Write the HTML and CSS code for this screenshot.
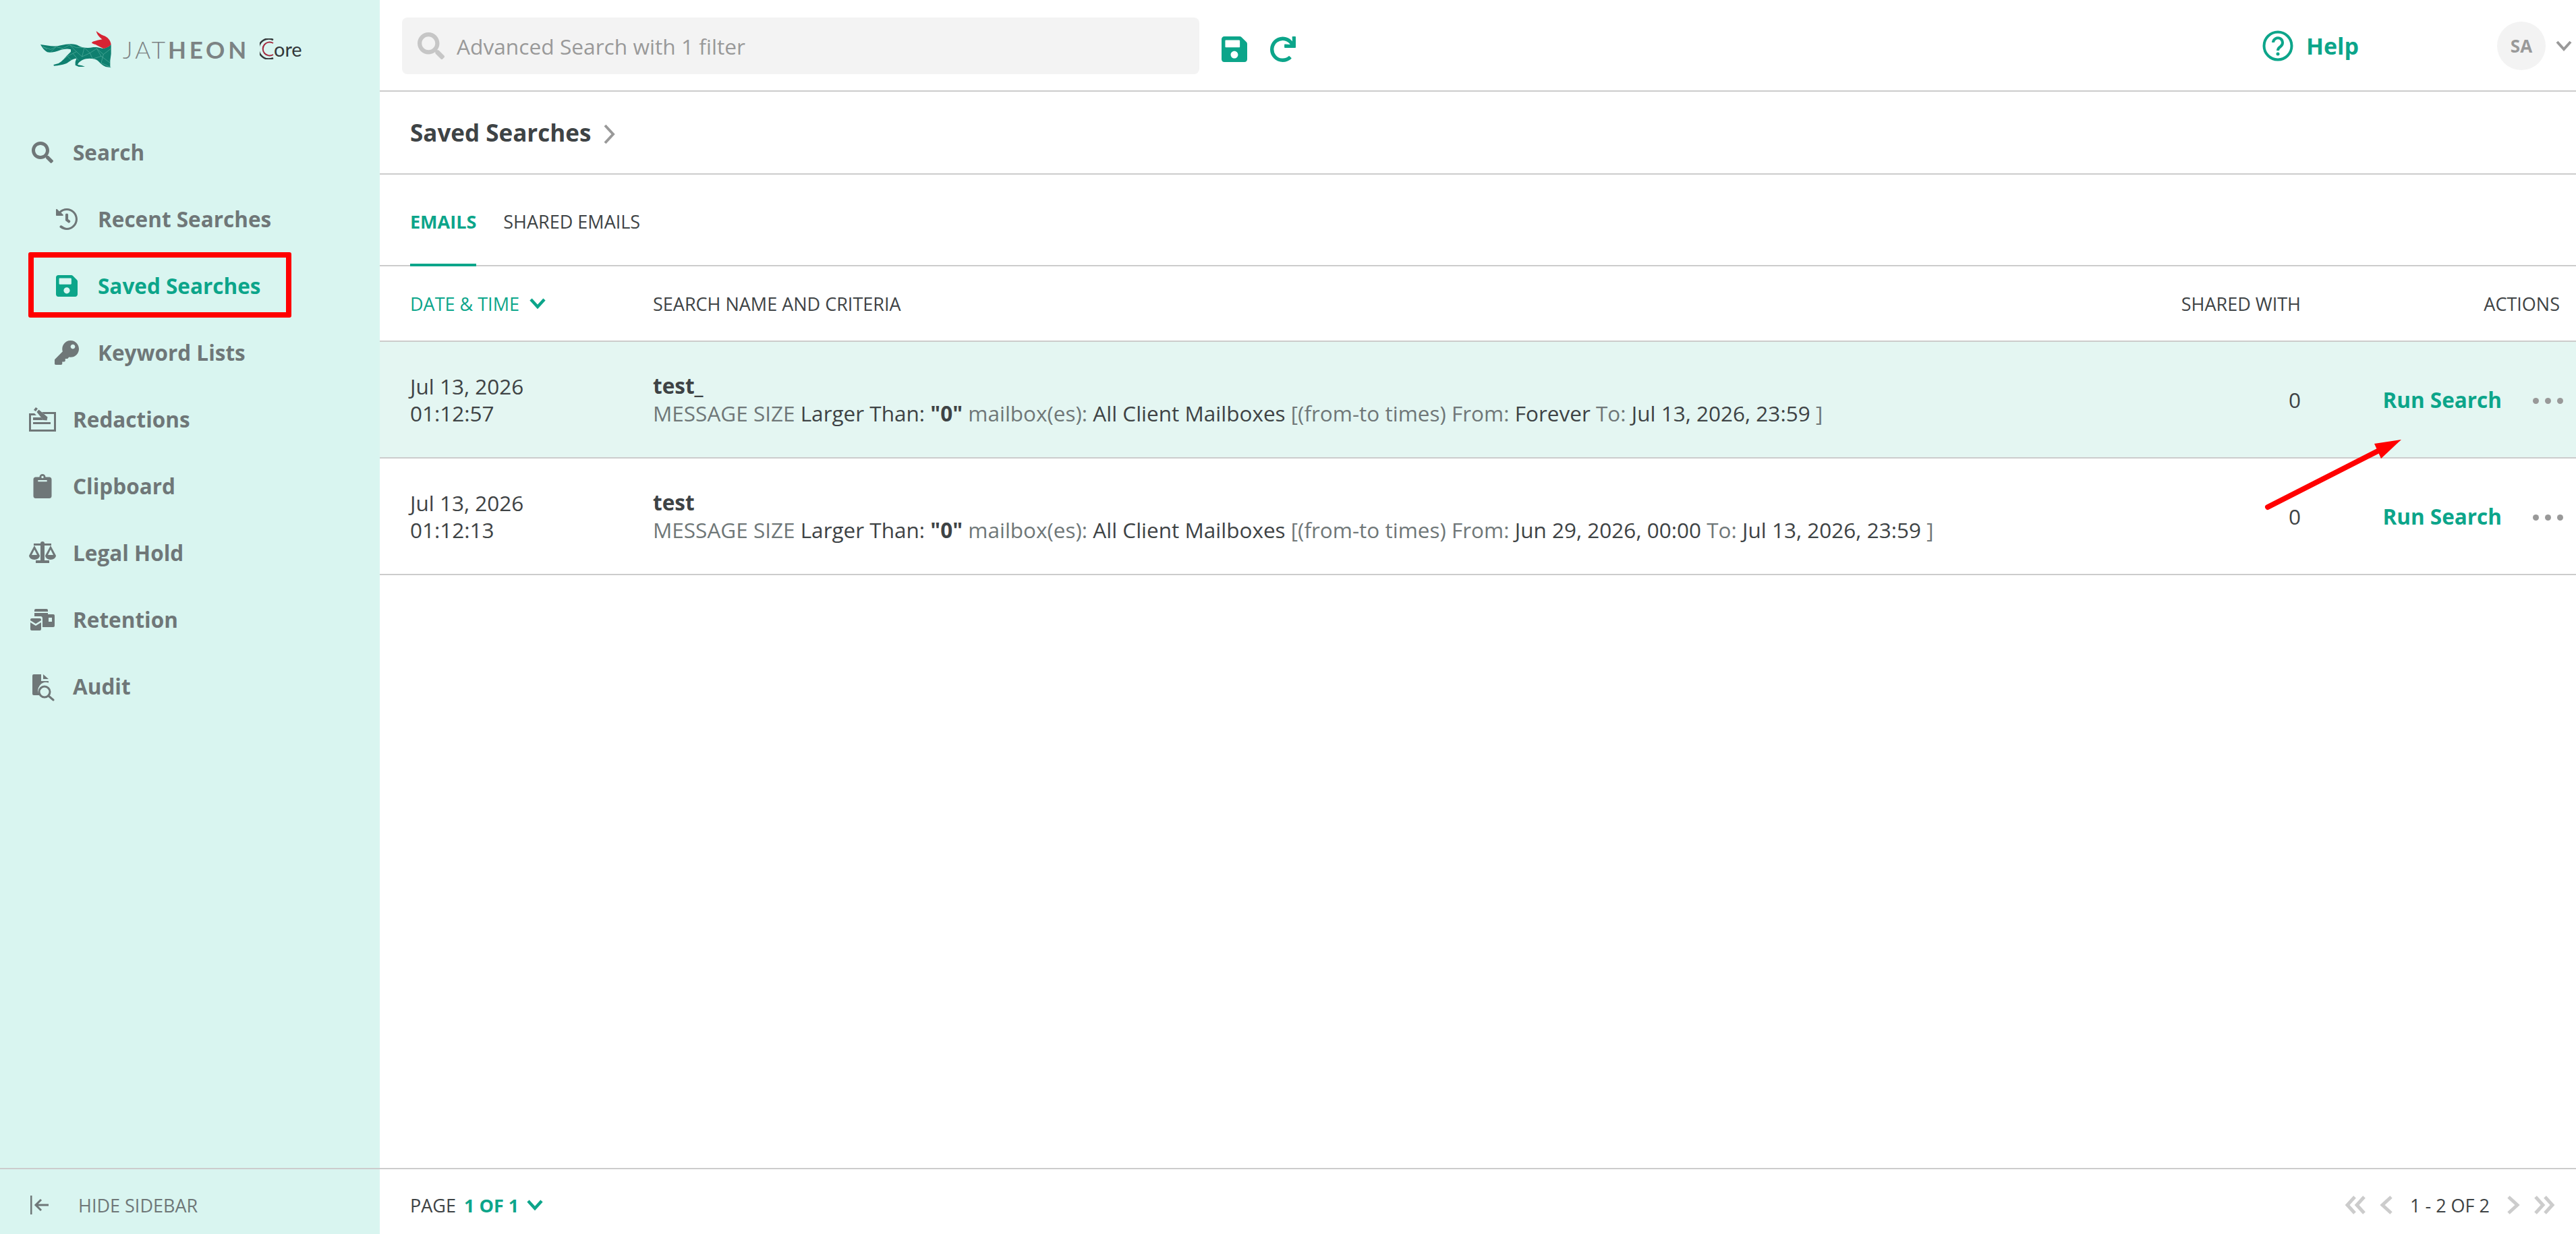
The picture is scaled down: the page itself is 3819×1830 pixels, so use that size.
FILE: index.html
```html
<!DOCTYPE html>
<html lang="en">
<head>
<meta charset="utf-8">
<title>Saved Searches</title>
<link rel="stylesheet" href="styles.css">
</head>
<body>
<div class="app">
  <aside class="sidebar">
    <div class="logo">
      <svg class="fox" viewBox="0 0 390 210">
        <defs><clipPath id="foxclip"><path d="M30 78C60 82 90 90 120 82 150 74 185 72 200 84 215 92 240 96 265 90 285 88 305 96 310 96 325 92 338 86 344 78V120L340 150 340 178 344 181 320 177C305 172 295 160 285 150 270 140 240 136 215 148 205 154 198 160 195 168L215 172 228 177 200 177 185 170 185 155 190 140C175 140 160 152 150 160 135 168 110 172 90 173L88 168 110 162C130 150 140 135 150 125L165 110 165 100C150 96 135 98 120 102 100 110 75 116 60 112 48 106 38 92 30 78Z"/></clipPath></defs>
        <path class="fox-body" d="M30 78C60 82 90 90 120 82 150 74 185 72 200 84 215 92 240 96 265 90 285 88 305 96 310 96 325 92 338 86 344 78V120L340 150 340 178 344 181 320 177C305 172 295 160 285 150 270 140 240 136 215 148 205 154 198 160 195 168L215 172 228 177 200 177 185 170 185 155 190 140C175 140 160 152 150 160 135 168 110 172 90 173L88 168 110 162C130 150 140 135 150 125L165 110 165 100C150 96 135 98 120 102 100 110 75 116 60 112 48 106 38 92 30 78Z"/>
        <path class="fox-head" d="M278 18C288 26 298 34 310 38 328 44 342 58 344 78 336 88 322 94 310 96 298 90 285 84 275 78 266 76 260 74 258 70 264 62 285 60 305 55 295 48 282 36 278 18Z"/>
        <g clip-path="url(#foxclip)"><path class="fox-mesh" d="M40 88L75 100 100 88 130 96 160 80 190 92 225 92 250 116 280 96 310 122 344 96M150 130L190 110 215 132 250 116 262 142 300 130 340 160M175 118L200 150M225 92L215 132M280 96L300 130M310 122L300 160 340 178M100 88L75 112M130 96L120 102M190 110L160 80M110 162L150 130 170 150M60 100L40 88"/></g>
      </svg>
      <span class="wordmark"><span class="thin">JAT</span><span class="heavy">HEON</span></span>
      <span class="core">
        <svg class="core-ring" viewBox="0 0 21 31"><path class="ring-dark" d="M20 2A15 15 0 1 0 20 29"/><path class="ring-red" d="M20 7A10 10 0 1 0 20 24"/></svg>
        <span class="core-text">ore</span>
      </span>
    </div>
    <nav class="nav">
      <a class="nav-item"><svg class="nav-icon" viewBox="0 0 512 512"><path d="M505 442.700L405.300 343c-4.500-4.500-10.600-7-17-7H372c27.600-35.300 44-79.700 44-128C416 93.100 322.900 0 208 0S0 93.100 0 208s93.100 208 208 208c48.300 0 92.700-16.400 128-44v16.300c0 6.400 2.500 12.500 7 17l99.700 99.700c9.400 9.400 24.600 9.400 33.900 0l28.300-28.300c9.400-9.400 9.400-24.600.100-34zM208 336c-70.700 0-128-57.200-128-128 0-70.700 57.200-128 128-128 70.700 0 128 57.200 128 128 0 70.700-57.200 128-128 128z"/></svg><span>Search</span></a>
      <a class="nav-item sub"><svg class="nav-icon" viewBox="8 8 496 496"><path d="M504 255.500c.3 136.600-111.200 248.400-247.800 248.500-59 0-113.200-20.500-155.800-54.900-11.100-8.900-11.900-25.500-1.900-35.600l8-8c8.600-8.600 22.400-9.500 31.900-2C173 425.100 212.800 456 256 456c110 0 200-90 200-200S366 56 256 56c-48.800 0-99.100 18.970-132 50l46.700 46.700c10.100 10.100 2.900 27.300-11.300 27.300H24c-8.800 0-16-7.200-16-16V38.600c0-14.300 17.200-21.400 27.300-11.300l49.400 49.400C129.200 34.100 189.600 8 256 8c136.800 0 247.700 110.800 248 247.500zM323 334.300l9.900-12.600c8.100-10.500 6.200-25.500-4.200-33.700L288 256.300V152c0-13.300-10.700-24-24-24h-16c-13.300 0-24 10.700-24 24v135.700l65.400 50.800c10.500 8.100 25.500 6.300 33.600-4.200z"/></svg><span>Recent Searches</span></a>
      <a class="nav-item sub active"><svg class="nav-icon" viewBox="0 32 448 448"><path d="M433.941 129.941l-83.882-83.882A48 48 0 0 0 316.118 32H48C21.490 32 0 53.490 0 80v352c0 26.510 21.490 48 48 48h352c26.510 0 48-21.490 48-48V163.882a48 48 0 0 0-14.059-33.941zM224 416c-35.346 0-64-28.654-64-64 0-35.346 28.654-64 64-64s64 28.654 64 64c0 35.346-28.654 64-64 64zm96-304.520V212c0 6.627-5.373 12-12 12H76c-6.627 0-12-5.373-12-12V108c0-6.627 5.373-12 12-12h228.520c3.183 0 6.235 1.264 8.485 3.515l3.480 3.480A11.996 11.996 0 0 1 320 111.480z"/></svg><span>Saved Searches</span></a>
      <a class="nav-item sub"><svg class="nav-icon key" viewBox="0 0 512 512"><path d="M512 176C512 273.200 433.200 352 336 352c-11.200 0-22.200-1.100-32.800-3.100l-24 27A24 24 0 0 1 261.200 384H224v40c0 13.300-10.700 24-24 24h-40v40c0 13.300-10.700 24-24 24H24c-13.300 0-24-10.700-24-24v-78.100c0-6.400 2.500-12.500 7-17l161.800-161.800C163.100 213.800 160 195.300 160 176 160 78.800 238.800 0 336 0c97.500 0 176 78.500 176 176zM336 128c0 26.500 21.500 48 48 48s48-21.500 48-48-21.500-48-48-48-48 21.500-48 48z"/></svg><span>Keyword Lists</span></a>
      <a class="nav-item"><svg class="nav-icon wide" viewBox="0 0 40 36"><path d="M0 9h8l3 3H3v21h34V10H22l-3-3h21v29H0z"/><path d="M7 4l3-4 3 2-3 4zM11.500 7l3-3.500 13 11-1 5-5.500-.5z"/><path d="M6 15h12l3 4H6zM6 22h26v3H6z"/></svg><span>Redactions</span></a>
      <a class="nav-item"><svg class="nav-icon tall" viewBox="0 0 384 512"><path d="M384 112v352c0 26.510-21.490 48-48 48H48c-26.510 0-48-21.490-48-48V112c0-26.510 21.490-48 48-48h80c0-35.290 28.710-64 64-64s64 28.710 64 64h80c26.510 0 48 21.490 48 48zM192 40c-13.250 0-24 10.750-24 24s10.750 24 24 24 24-10.750 24-24-10.750-24-24-24zm96 114v-20a6 6 0 0 0-6-6H102a6 6 0 0 0-6 6v20a6 6 0 0 0 6 6h180a6 6 0 0 0 6-6z"/></svg><span>Clipboard</span></a>
      <a class="nav-item"><svg class="nav-icon wide" viewBox="0 0 40 32"><path d="M7 2h10a3 3 0 0 1 6 0h10v3H23v22h7v4H10v-4h7V5H7z"/><path fill-rule="evenodd" d="M8 5l8 15a8 6 0 0 1-16 0zM8 11l-4 8h8zM32 5l8 15a8 6 0 0 1-16 0zM32 11l-4 8h8z"/></svg><span>Legal Hold</span></a>
      <a class="nav-item"><svg class="nav-icon wide" viewBox="-2 0 40 32"><path d="M6 2a2 2 0 0 1 2-2h16a2 2 0 0 1 2 2v2H6zM6 6h20v2h8a2 2 0 0 1 2 2v15a2 2 0 0 1-2 2H18V14a3 3 0 0 0-3-3H6z"/><path class="hole" d="M27 13h5v6h-5z"/><path d="M0 16a2 2 0 0 1 2-2h12a2 2 0 0 1 2 2v1l-8 5-8-5zM0 20l8 5 8-5v10a2 2 0 0 1-2 2H2a2 2 0 0 1-2-2z"/></svg><span>Retention</span></a>
      <a class="nav-item"><svg class="nav-icon audit" viewBox="0 0 33 40"><path d="M0 2a2 2 0 0 1 2-2h11v10h11v2.500a12 12 0 0 0-14 17.500v1H2a2 2 0 0 1-2-2zM16 0l8 7h-8z"/><circle class="lens" cx="18" cy="26" r="8"/><path class="lens-handle" d="M24 32l7 6"/></svg><span>Audit</span></a>
    </nav>
    <div class="side-foot">
      <svg class="hide-icon" viewBox="0 0 28 32"><path d="M1 2v28"/><path d="M27 16H8M16 8l-8 8 8 8"/></svg>
      <span>HIDE SIDEBAR</span>
    </div>
    <div class="red-box"></div>
  </aside>

  <main class="main">
    <header class="topbar">
      <div class="search-box">
        <svg class="search-icon" viewBox="0 0 512 512"><path d="M505 442.700L405.300 343c-4.500-4.500-10.600-7-17-7H372c27.600-35.300 44-79.700 44-128C416 93.100 322.900 0 208 0S0 93.100 0 208s93.100 208 208 208c48.300 0 92.700-16.400 128-44v16.300c0 6.400 2.500 12.500 7 17l99.700 99.700c9.400 9.400 24.600 9.400 33.900 0l28.300-28.300c9.400-9.400 9.400-24.600.100-34zM208 336c-70.700 0-128-57.200-128-128 0-70.700 57.200-128 128-128 70.700 0 128 57.200 128 128 0 70.700-57.200 128-128 128z"/></svg>
        <span>Advanced Search with 1 filter</span>
      </div>
      <svg class="tool-icon" viewBox="0 32 448 448"><path d="M433.941 129.941l-83.882-83.882A48 48 0 0 0 316.118 32H48C21.490 32 0 53.490 0 80v352c0 26.510 21.490 48 48 48h352c26.510 0 48-21.490 48-48V163.882a48 48 0 0 0-14.059-33.941zM224 416c-35.346 0-64-28.654-64-64 0-35.346 28.654-64 64-64s64 28.654 64 64c0 35.346-28.654 64-64 64zm96-304.520V212c0 6.627-5.373 12-12 12H76c-6.627 0-12-5.373-12-12V108c0-6.627 5.373-12 12-12h228.520c3.183 0 6.235 1.264 8.485 3.515l3.480 3.480A11.996 11.996 0 0 1 320 111.480z"/></svg>
      <svg class="tool-icon" viewBox="8 0 504 504"><path d="M500.330 0h-47.410a12 12 0 0 0-12 12.570l4 82.760A247.420 247.420 0 0 0 256 8C119.340 8 8.900 119.530 8 256.190 7.100 393.070 118.100 504 256 504a247.100 247.100 0 0 0 166.180-63.910 12 12 0 0 0 .48-17.430l-34-34a12 12 0 0 0-16.380-.55A176 176 0 1 1 402.100 157.800l-101.530-4.870a12 12 0 0 0-12.570 12v47.410a12 12 0 0 0 12 12h200.330a12 12 0 0 0 12-12V12a12 12 0 0 0-12-12z"/></svg>
      <div class="top-right">
        <a class="help">
          <svg class="help-icon" viewBox="0 0 46 46"><circle cx="23" cy="23" r="20.500"/><path d="M16 18a7 7 0 1 1 11 6c-3 2-4 3-4 6"/><circle class="help-dot" cx="23" cy="35" r="2.500"/></svg>
          <span>Help</span>
        </a>
        <span class="avatar">SA</span>
        <svg class="avatar-caret" viewBox="0 0 24 16"><path d="M2 2l10 11L22 2"/></svg>
      </div>
    </header>

    <div class="crumb">
      <h1>Saved Searches</h1>
      <svg class="crumb-chevron" viewBox="0 0 18 30"><path d="M3 2l12 13L3 28"/></svg>
    </div>

    <div class="tabs">
      <a class="tab on">EMAILS</a>
      <a class="tab">SHARED EMAILS</a>
    </div>

    <div class="table">
      <div class="row head">
        <div class="sort">DATE &amp; TIME <svg class="sort-chevron" viewBox="0 0 24 16"><path d="M2 2l10 11L22 2"/></svg></div>
        <div>SEARCH NAME AND CRITERIA</div>
        <div class="num">SHARED WITH</div>
        <div class="act-head">ACTIONS</div>
      </div>
      <div class="row item hl">
        <div class="date">Jul 13, 2026<br>01:12:57</div>
        <div class="info">
          <div class="name">test_</div>
          <div class="crit"><i>MESSAGE SIZE</i> Larger Than: <b>"0"</b> <i>mailbox(es):</i> All Client Mailboxes <i>[(from-to times) From:</i> Forever <i>To:</i> Jul 13, 2026, 23:59 <i>]</i></div>
        </div>
        <div class="num">0</div>
        <div class="acts"><a class="run">Run Search</a><span class="dots"><span></span><span></span><span></span></span></div>
      </div>
      <div class="row item">
        <div class="date">Jul 13, 2026<br>01:12:13</div>
        <div class="info">
          <div class="name">test</div>
          <div class="crit"><i>MESSAGE SIZE</i> Larger Than: <b>"0"</b> <i>mailbox(es):</i> All Client Mailboxes <i>[(from-to times) From:</i> Jun 29, 2026, 00:00 <i>To:</i> Jul 13, 2026, 23:59 <i>]</i></div>
        </div>
        <div class="num">0</div>
        <div class="acts"><a class="run">Run Search</a><span class="dots"><span></span><span></span><span></span></span></div>
      </div>
    </div>

    <footer class="foot">
      <div class="page">PAGE <b>1 OF 1</b> <svg class="sort-chevron" viewBox="0 0 24 16"><path d="M2 2l10 11L22 2"/></svg></div>
      <div class="pager">
        <svg class="pg dbl" viewBox="0 0 32 30"><path d="M15 3L4 15l11 12M29 3L18 15l11 12"/></svg>
        <svg class="pg" viewBox="0 0 20 30"><path d="M17 3L4 15l13 12"/></svg>
        <span class="count">1 - 2 OF 2</span>
        <svg class="pg" viewBox="0 0 20 30"><path d="M3 3l13 12L3 27"/></svg>
        <svg class="pg dbl" viewBox="0 0 32 30"><path d="M3 3l11 12L3 27M17 3l11 12-11 12"/></svg>
      </div>
    </footer>
  </main>

  <svg class="arrow" viewBox="0 0 220 120"><path class="arrow-line" d="M12 112L175 29"/><path class="arrow-head" d="M210 12L170 18 180 40Z"/></svg>
</div>
</body>
</html>
```

FILE: styles.css
```css
* { box-sizing: border-box; }
html, body { margin: 0; height: 100%; }
body { font-family: "Open Sans", sans-serif; color: #3e4345; background: #fff; }
svg { display: block; flex: none; }
a { color: inherit; text-decoration: none; }
b { font-weight: 700; }
i { font-style: normal; color: #6f7778; }

.app { position: relative; display: grid; grid-template-columns: 563px 1fr; width: 3819px; height: 1830px; overflow: hidden; }

/* sidebar */
.sidebar { position: relative; display: flex; flex-direction: column; background: #d9f5f0; color: #6f7778; }
.logo { display: flex; align-items: center; height: 144px; padding-left: 50px; }
.fox { width: 130px; height: 70px; margin-top: 6px; }
.fox-body { fill: #0f7f6f; }
.fox-head { fill: #d62433; }
.fox-mesh { fill: none; stroke: #6fc0ae; stroke-width: 1.500; }
.wordmark { margin-left: 2px; margin-top: 3px; font-family: Lato, sans-serif; font-size: 35px; color: #7c8384; line-height: 1; white-space: nowrap; }
.thin { font-weight: 300; letter-spacing: 4px; }
.heavy { font-weight: 700; letter-spacing: 4.800px; }
.core { display: flex; align-items: center; margin-left: 15px; }
.core-ring { width: 21px; height: 31px; }
.ring-dark { fill: none; stroke: #33383a; stroke-width: 2.500; }
.ring-red { fill: none; stroke: #a3283c; stroke-width: 2; }
.core-text { margin-left: 0; font-family: Lato, sans-serif; font-size: 29px; color: #33383a; line-height: 1; }

.nav { display: flex; flex-direction: column; padding-top: 32px; }
.nav-item { display: flex; align-items: center; height: 99px; padding-left: 47px; font-size: 31.500px; font-weight: 700; }
.nav-item.sub { padding-left: 83px; }
.nav-item.active { color: #0ca58a; }
.nav-icon { width: 32px; height: 32px; margin-right: 29px; fill: currentColor; }
.nav-item.sub .nav-icon { margin-right: 30px; }
.nav-icon.wide { width: 40px; height: 36px; margin-left: -4px; margin-right: 25px; }
.nav-icon.tall { height: 36px; }
.nav-item.sub .nav-icon.key { width: 36px; height: 36px; margin-left: -2px; margin-right: 28px; }
.nav-icon.audit { width: 33px; height: 40px; margin-top: 4px; margin-left: 1px; margin-right: 27px; }
.hole { fill: #d9f5f0; }
.lens { fill: #d9f5f0; stroke: currentColor; stroke-width: 3; }
.lens-handle { fill: none; stroke: currentColor; stroke-width: 3; stroke-linecap: round; }

.side-foot { display: flex; align-items: center; height: 98px; margin-top: auto; padding-left: 45px; padding-top: 10px; border-top: 2px solid #ccc; font-size: 27px; }
.hide-icon { width: 28px; height: 32px; margin-right: 43px; fill: none; stroke: currentColor; stroke-width: 3; }
.red-box { position: absolute; left: 42px; top: 374px; width: 390px; height: 97px; border: 8px solid #f00; border-radius: 3px; }

/* main */
.main { display: flex; flex-direction: column; min-width: 0; }
.topbar { display: flex; align-items: center; height: 136px; padding-left: 33px; padding-right: 6px; padding-top: 2px; border-bottom: 2px solid #ccc; }
.search-box { display: flex; align-items: center; width: 1182px; height: 84px; padding-left: 23px; border-radius: 8px; background: #f3f3f3; font-size: 31.700px; color: #999; }
.search-icon { width: 40px; height: 40px; margin-right: 18px; fill: #c6c6c6; }
.tool-icon { width: 38px; height: 38px; margin-left: 33px; margin-top: 10px; fill: #0ca58a; }
.tool-icon + .tool-icon { margin-left: 34px; }
.top-right { display: flex; align-items: center; margin-left: auto; }
.help { display: flex; align-items: center; color: #0ca58a; font-size: 34px; font-weight: 700; margin-right: 205px; }
.help-icon { width: 46px; height: 46px; margin-right: 19px; fill: none; stroke: #0ca58a; stroke-width: 4; }
.help-dot { fill: #0ca58a; stroke: none; }
.avatar { display: flex; align-items: center; justify-content: center; width: 72px; height: 72px; border-radius: 50%; background: #f3f3f3; color: #999; font-size: 26px; font-weight: 700; }
.avatar-caret { width: 24px; height: 16px; margin-left: 15px; fill: none; stroke: #999; stroke-width: 4; }

.crumb { display: flex; align-items: center; height: 123px; padding-left: 45px; border-bottom: 2px solid #ccc; }
.crumb h1 { margin: 0; font-size: 35px; font-weight: 700; color: #3e4345; }
.crumb-chevron { width: 18px; height: 30px; margin-left: 18px; margin-top: 4px; fill: none; stroke: #999; stroke-width: 4; }

.tabs { display: flex; gap: 40px; height: 136px; padding-left: 45px; border-bottom: 2px solid #ccc; }
.tab { display: flex; align-items: center; height: 136px; border-bottom: 4px solid transparent; font-size: 27px; padding-top: 6px; flex: none; }
.tab.on { color: #0ca58a; font-weight: 700; border-bottom-color: #0ca58a; }

.row { display: grid; align-items: center; padding-left: 45px; border-bottom: 2px solid #ccc; }
.head { grid-template-columns: 360px 1fr 200px 384px; height: 112px; font-size: 27px; padding-right: 24px; }
.sort { display: flex; align-items: center; color: #0ca58a; }
.sort-chevron { width: 24px; height: 16px; margin-left: 15px; fill: none; stroke: #0ca58a; stroke-width: 4.500; }
.num { text-align: right; }
.act-head { text-align: right; }
.item { grid-template-columns: 360px 1fr 200px 389px; height: 173px; font-size: 31.500px; padding-right: 19px; }
.hl { background: #e4f6f2; }
.date { line-height: 40px; }
.name { font-weight: 700; line-height: 40px; }
.crit { line-height: 41px; white-space: nowrap; }
.crit b { color: #3e4345; }
.acts { display: flex; align-items: center; justify-content: flex-end; }
.run { color: #0ca58a; font-weight: 700; margin-right: 46px; }
.dots { display: flex; gap: 9px; margin-top: 4px; }
.dots span { width: 9px; height: 9px; border-radius: 50%; background: #999; }

.foot { display: flex; align-items: center; justify-content: space-between; height: 98px; margin-top: auto; padding-left: 45px; padding-right: 31px; padding-top: 10px; border-top: 2px solid #ccc; font-size: 27px; }
.page { display: flex; align-items: center; gap: 12px; }
.page b { color: #0ca58a; font-weight: 700; }
.page .sort-chevron { margin-left: 0; }
.pager { display: flex; align-items: center; }
.pg { width: 20px; height: 30px; fill: none; stroke: #ccc; stroke-width: 5; margin-right: 20px; }
.pg.dbl { width: 32px; }
.pg:last-child { margin-right: 0; }
.count { margin: 0 25px 0 5px; }

/* annotation */
.arrow { position: absolute; left: 3350px; top: 640px; width: 220px; height: 120px; }
.arrow-line { stroke: #f00; stroke-width: 8; stroke-linecap: round; fill: none; }
.arrow-head { fill: #f00; }
```
